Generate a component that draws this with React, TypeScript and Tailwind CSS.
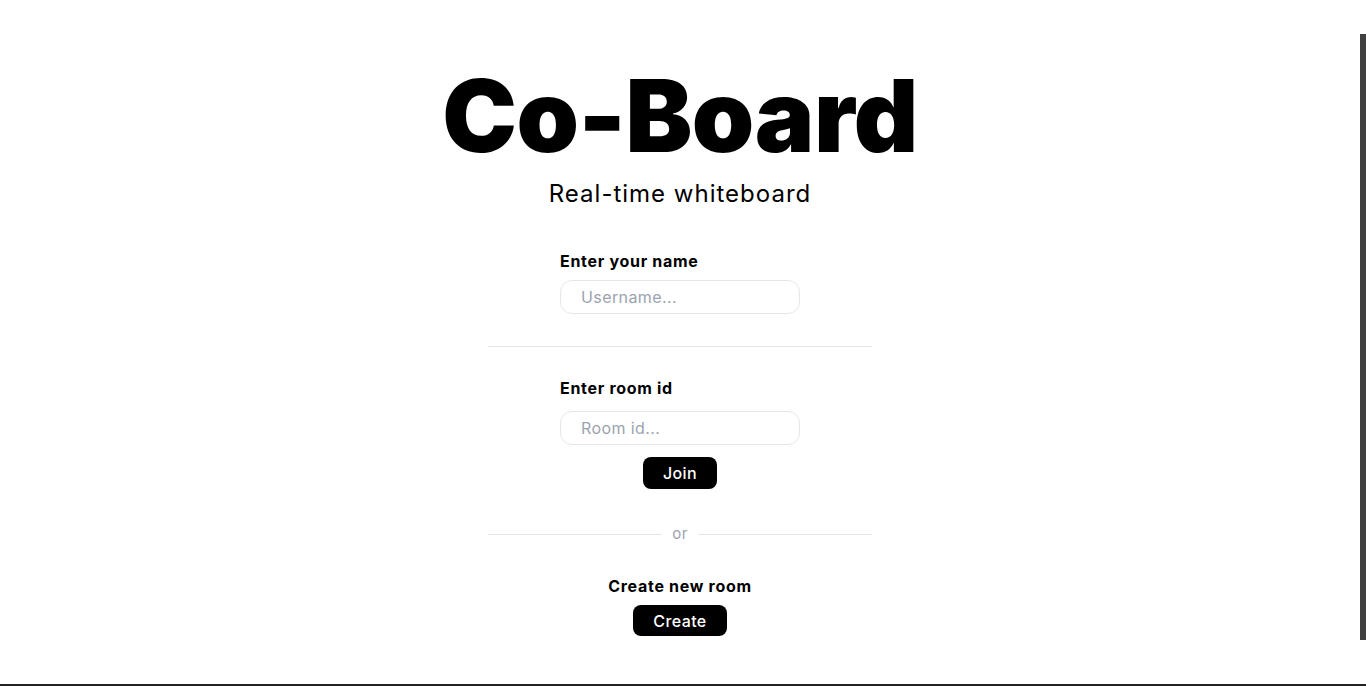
import React from "react";

const font = { fontFamily: "Inter, 'DejaVu Sans', sans-serif" };

export default function App() {
  return (
    <div
      className="flex h-[686px] w-full overflow-hidden bg-white border-b-2 border-[#222222]"
      style={font}
    >
      <div className="flex flex-1 flex-col items-center pt-[57px]">
        <h1 className="text-[100px] leading-[118px] font-black tracking-[-0.5px] text-black">
          Co-Board
        </h1>
        <p className="mt-[4px] text-[24px] leading-[30px] tracking-[1px] text-black">
          Real-time whiteboard
        </p>

        {/* name */}
        <div className="mt-[42px] flex w-[240px] flex-col">
          <label className="text-[16px] leading-[20px] font-bold tracking-[0.7px] text-black">
            Enter your name
          </label>
          <input
            className="mt-[9px] h-[34px] w-[240px] rounded-[12px] border border-[#e5e7eb] px-[20px] text-[16px] tracking-[0.4px] text-black outline-none placeholder:text-[#9ca3af]"
            placeholder="Username..."
          />
        </div>

        <div className="mt-[32px] h-px w-[384px] bg-[#e5e7eb]"></div>

        {/* room id */}
        <div className="mt-[31px] flex w-[240px] flex-col items-center">
          <label className="w-full text-[16px] leading-[20px] font-bold tracking-[0.7px] text-black">
            Enter room id
          </label>
          <input
            className="mt-[13px] h-[34px] w-[240px] rounded-[12px] border border-[#e5e7eb] px-[20px] text-[16px] tracking-[0.4px] text-black outline-none placeholder:text-[#9ca3af]"
            placeholder="Room id..."
          />
          <button className="mt-[12px] h-[32px] w-[74px] rounded-[8px] bg-black text-[16px] font-medium tracking-[0.4px] text-white">
            Join
          </button>
        </div>

        {/* or */}
        <div className="mt-[35px] flex w-[384px] items-center gap-[10px]">
          <div className="h-px flex-1 bg-[#e5e7eb]"></div>
          <span className="text-[15px] leading-[20px] tracking-[0.4px] text-[#9ca3af]">or</span>
          <div className="h-px flex-1 bg-[#e5e7eb]"></div>
        </div>

        {/* create */}
        <p className="mt-[32px] text-[16px] leading-[20px] font-bold tracking-[0.7px] text-black">
          Create new room
        </p>
        <button className="mt-[9px] h-[31px] w-[94px] rounded-[8px] bg-black text-[16px] font-medium tracking-[0.4px] text-white">
          Create
        </button>
      </div>

      {/* scrollbar strip on the right edge */}
      <div className="flex w-[6px] flex-col pt-[34px] pb-[44px]">
        <div className="flex-1 bg-[#404040]"></div>
      </div>
    </div>
  );
}
